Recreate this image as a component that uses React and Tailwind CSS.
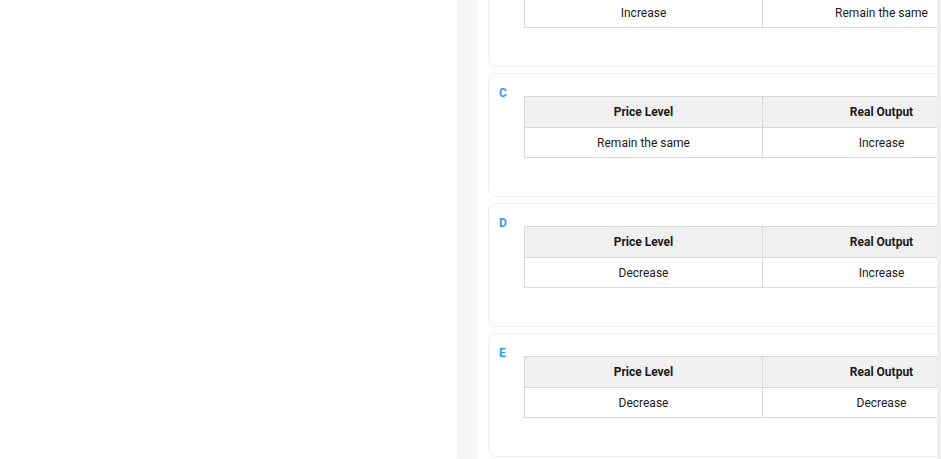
const options = [
  { letter: "B", price: "Increase", output: "Remain the same" },
  { letter: "C", price: "Remain the same", output: "Increase" },
  { letter: "D", price: "Decrease", output: "Increase" },
  { letter: "E", price: "Decrease", output: "Decrease" },
]

const OptionCard = ({ letter, price, output }) => (
  <div className="w-[560px] h-[124px] shrink-0 rounded-[8px] border border-[#eceef0] bg-white pt-[13px] pl-[10px]">
    <div className="h-[9px] text-[12px] leading-[12px] font-bold text-[#2f9df2]">{letter}</div>
    <table className="ml-[25px] border-collapse text-[12px] text-[#1a1a1a]">
      <thead>
        <tr className="bg-[#f0f0f0]">
          <th className="w-[238px] h-[31px] border border-[#d9d9d9] font-bold">Price Level</th>
          <th className="w-[238px] h-[31px] border border-[#d9d9d9] font-bold">Real Output</th>
        </tr>
      </thead>
      <tbody>
        <tr>
          <td className="h-[30px] border border-[#d9d9d9] text-center">{price}</td>
          <td className="h-[30px] border border-[#d9d9d9] text-center">{output}</td>
        </tr>
      </tbody>
    </table>
  </div>
)

export default function App() {
  return (
    <div className="flex h-[459px] w-[941px] overflow-hidden bg-white font-['Roboto',sans-serif]">
      <div className="w-[457px] shrink-0 bg-white" />
      <div className="w-[20px] shrink-0 bg-gradient-to-r from-[#f3f4f6] to-[#f7f8f9]" />
      <div className="flex-1 overflow-hidden bg-white pl-[11px]">
        <div className="-mt-[57px] flex flex-col gap-[6px]">
          {options.map((o) => (
            <OptionCard key={o.letter} {...o} />
          ))}
        </div>
      </div>
      <div className="w-[4px] shrink-0 bg-[#eeeff1]" />
    </div>
  )
}
